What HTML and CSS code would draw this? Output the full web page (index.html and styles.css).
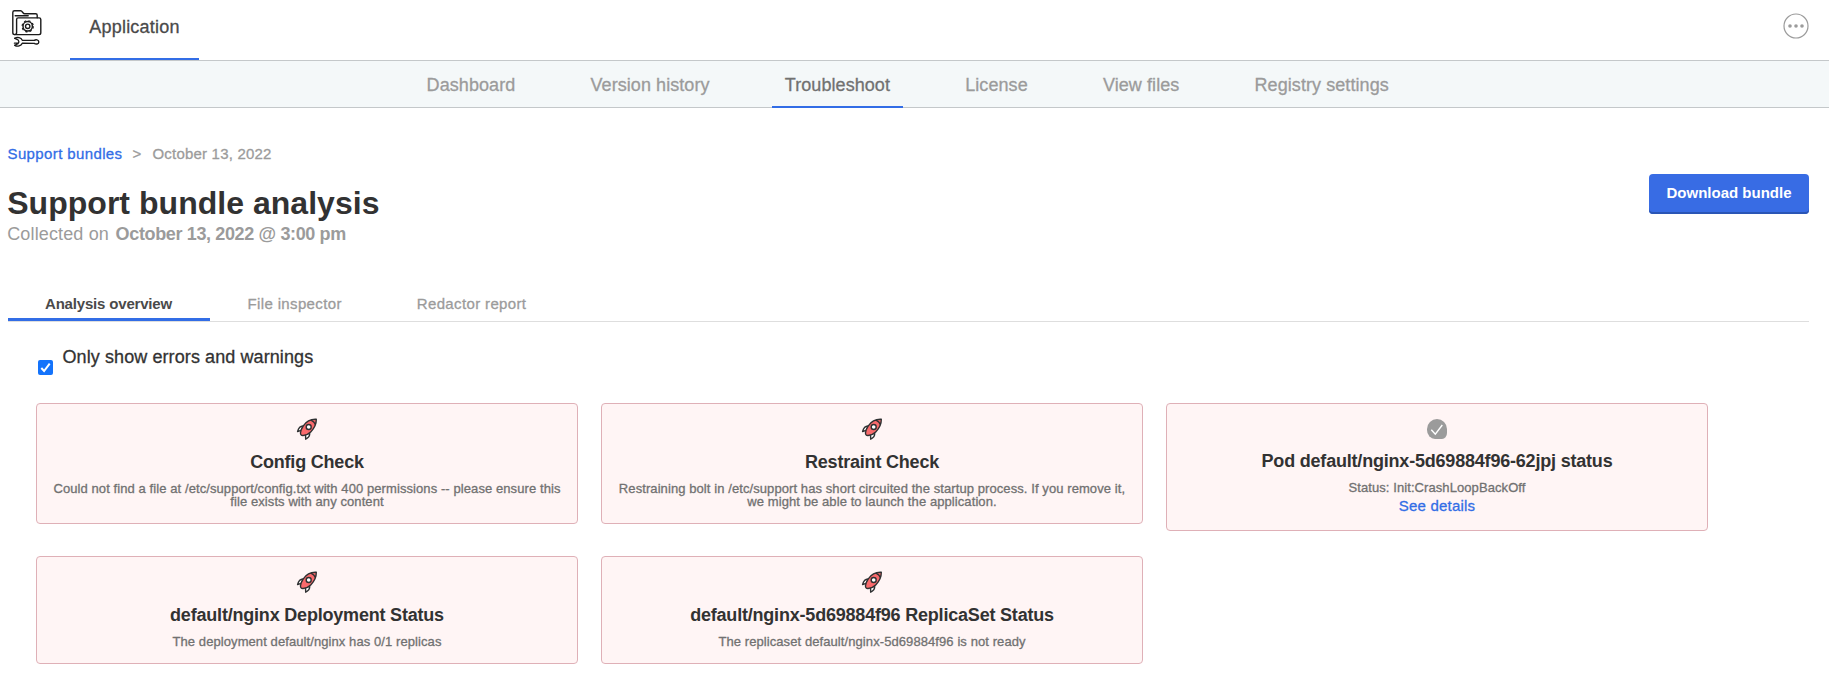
FILE: index.html
```html
<!DOCTYPE html>
<html lang="en">
<head>
<meta charset="utf-8">
<title>Support bundle analysis</title>
<link rel="stylesheet" href="styles.css">
</head>
<body>
<svg class="defs" aria-hidden="true">
  <symbol id="rocket" viewBox="0 0 22 22">
    <g stroke="#2f3132" stroke-width="1.4" stroke-linejoin="round" stroke-linecap="round">
      <path fill="#fff" d="M7 8C4 8 2.300 10.700 1.600 13.500l3.600-1.200zM13.600 15.200c.4 2.700-1.600 4.900-3.900 6l-.2-4.400z"/>
      <path fill="#f96a6c" d="M20.300 1.300C15 1 10.200 3.600 7.300 7.800 5.700 10.200 4.800 12.600 4.500 14.700c-.2 1.800.8 3 2.600 2.800 2.700-.3 5.600-1.300 7.600-3.400 3.400-3.600 5.700-7.600 5.600-12.800z"/>
      <path fill="none" d="M15.300 2.300c2 .9 3.300 2.300 4 4"/>
      <circle cx="12.700" cy="9" r="2.500" fill="#fff"/>
    </g>
  </symbol>
</svg>

<header class="topbar">
  <svg class="logo" viewBox="0 0 30 37" fill="none" stroke="#1b1b1b" stroke-width="1.400" stroke-linejoin="round" stroke-linecap="round">
    <path d="M2.700 24.600C1.500 24.600.8 23.800.8 22.800V2.500C.8 1.400 1.500.8 2.500.8h6.200c1.700 0 2.100 3 4 3h11c1 0 1.500.6 1.500 1.500v2.500"/>
    <path d="M3.200 5.700h13"/>
    <path d="M2.700 24.600c1.300 0 1.900-.8 1.900-1.800V9.500c0-1 .6-1.600 1.500-1.600h21c1 0 1.700.6 1.700 1.600v13.300c0 1.100-.7 1.800-1.800 1.800z"/>
    <circle cx="15.700" cy="16.300" r="4.700" stroke-width="1.500"/>
    <circle cx="15.700" cy="16.300" r="5.600" stroke-width="1.200" stroke-dasharray="2.200 2.200" stroke-linecap="butt"/>
    <circle cx="15.700" cy="16.300" r="2.200"/>
    <path d="M2.800 28.300C5.500 26.600 9 27.700 10.300 30.300l12 .1c1.300-1 4.500-1 4.500 1.500s-3 2.500-4.500 1.500l-12-.2C9 35.900 5.500 37 2.800 35.300" stroke-width="1.400"/>
    <path d="M2.800 28.300l3.400 1.700.7 1.900-.9 1.700-3.200 1.700M2.400 33.200h3" stroke-width="1.300"/>
  </svg>
  <a class="app-tab medium">Application</a>
  <svg class="more" viewBox="0 0 26 26">
    <circle cx="13" cy="13" r="12" fill="none" stroke="#9b9b9b" stroke-width="1.200"/>
    <g fill="#9b9b9b"><circle cx="7" cy="13" r="1.800"/><circle cx="13" cy="13" r="1.800"/><circle cx="19" cy="13" r="1.800"/></g>
  </svg>
</header>

<nav class="subnav medium">
  <a>Dashboard</a>
  <a>Version history</a>
  <a class="active">Troubleshoot</a>
  <a>License</a>
  <a>View files</a>
  <a>Registry settings</a>
</nav>

<main class="content">
  <div class="crumbs medium"><a>Support bundles</a><span class="sep">&gt;</span><span class="current">October 13, 2022</span></div>
  <section class="heading">
    <div class="titles">
      <h1>Support bundle analysis</h1>
      <p class="collected">Collected on <b>October 13, 2022 @ 3:00 pm</b></p>
    </div>
    <button class="download">Download bundle</button>
  </section>

  <div class="tabs medium">
    <a class="active">Analysis overview</a>
    <a>File inspector</a>
    <a>Redactor report</a>
  </div>

  <label class="filter medium">
    <span class="check"><svg viewBox="0 0 15 15"><path d="M3.300 8l2.800 3L11.700 3.700" fill="none" stroke="#fff" stroke-width="2"/></svg></span>
    <span>Only show errors and warnings</span>
  </label>

  <div class="cards">
    <article class="card">
      <svg class="icon"><use href="#rocket"/></svg>
      <h2>Config Check</h2>
      <p class="medium">Could not find a file at /etc/support/config.txt with 400 permissions -- please ensure this<br>file exists with any content</p>
    </article>
    <article class="card">
      <svg class="icon"><use href="#rocket"/></svg>
      <h2>Restraint Check</h2>
      <p class="medium">Restraining bolt in /etc/support has short circuited the startup process. If you remove it,<br>we might be able to launch the application.</p>
    </article>
    <article class="card">
      <span class="status"><svg viewBox="0 0 20 20"><path d="M4.300 10.700l4 4.500L15.300 6" fill="none" stroke="#fff" stroke-width="1.400"/></svg></span>
      <h2>Pod default/nginx-5d69884f96-62jpj status</h2>
      <p class="medium">Status: Init:CrashLoopBackOff</p>
      <a class="details medium">See details</a>
    </article>
    <article class="card">
      <svg class="icon"><use href="#rocket"/></svg>
      <h2>default/nginx Deployment Status</h2>
      <p class="medium">The deployment default/nginx has 0/1 replicas</p>
    </article>
    <article class="card">
      <svg class="icon"><use href="#rocket"/></svg>
      <h2>default/nginx-5d69884f96 ReplicaSet Status</h2>
      <p class="medium">The replicaset default/nginx-5d69884f96 is not ready</p>
    </article>
  </div>
</main>
</body>
</html>
```
FILE: styles.css
```css
* { box-sizing: border-box; }
body {
  margin: 0;
  background: #fff;
  color: #323232;
  font-family: "Liberation Sans", Arial, sans-serif;
  overflow: hidden;
}
h1, h2, p { margin: 0; }
.defs { display: none; }
.medium { -webkit-text-stroke: 0.3px currentColor; }

.topbar {
  display: flex;
  align-items: flex-start;
  height: 61px;
  padding: 0 20px 0 12px;
  border-bottom: 1px solid #c4c8ca;
}
.logo { width: 30px; height: 37px; margin-top: 10px; }
.app-tab {
  width: 129px;
  height: 60px;
  margin-left: 28px;
  border-bottom: 2px solid #326de6;
  color: #4a4a4a;
  font-size: 18px;
  letter-spacing: 0.24px;
  line-height: 54px;
  text-align: center;
}
.more { width: 26px; height: 26px; margin: 13px 0 0 auto; }

.subnav {
  display: flex;
  gap: 50px;
  height: 47px;
  padding-left: 414px;
  background: #f4f8f9;
  border-bottom: 1px solid #c4c8ca;
  color: #9b9b9b;
  font-size: 18px;
  letter-spacing: 0.07px;
  line-height: 48px;
}
.subnav a { height: 47px; padding: 0 12.6px; }
.subnav .active { color: #717171; border-bottom: 2px solid #326de6; }

.content { padding: 0 20px 0 8px; }
.crumbs {
  display: flex;
  margin-left: -0.5px;
  padding-top: 37px;
  font-size: 15px;
  line-height: 18px;
  color: #9b9b9b;
}
.crumbs a { width: 115px; color: #326de6; letter-spacing: 0.38px; }
.crumbs .sep { width: 30px; padding-left: 10px; }
.crumbs .current { letter-spacing: 0.2px; }

.heading { display: flex; justify-content: space-between; padding-top: 11px; }
.titles { margin-left: -0.8px; }
h1 { margin-top: 9px; font-size: 32px; line-height: 40px; letter-spacing: 0.03px; }
.collected { color: #9b9b9b; font-size: 18px; line-height: 22px; letter-spacing: 0.14px; }
.collected b { margin-left: 1.5px; letter-spacing: -0.36px; }
.download {
  width: 160px;
  height: 40px;
  padding: 0 0 4px;
  border: 0;
  border-radius: 4px;
  background: #386ce4;
  box-shadow: inset 0 -2px #2a55b5;
  color: #fff;
  font: bold 15px "Liberation Sans", Arial, sans-serif;
}

.tabs {
  display: flex;
  height: 36px;
  margin-top: 41px;
  border-bottom: 1px solid #dedede;
  color: #9b9b9b;
  font-size: 15px;
  letter-spacing: 0.36px;
  line-height: 36px;
}
.tabs a { height: 35px; padding: 0 37.5px; }
.tabs .active {
  width: 202px;
  padding: 0 1px 0 0;
  border-bottom: 3px solid #326de6;
  color: #4a4a4a;
  font-weight: bold;
  letter-spacing: -0.18px;
  text-align: center;
  -webkit-text-stroke: 0;
}

.filter {
  display: flex;
  gap: 9.5px;
  height: 81px;
  padding: 24px 0 0 30px;
  font-size: 18px;
  letter-spacing: 0.09px;
  line-height: 22px;
}
.check { width: 15px; height: 15px; margin-top: 14px; border-radius: 2px; background: #1473fb; }
.check svg { display: block; }

.cards {
  display: grid;
  grid-template-columns: repeat(3, 542px);
  column-gap: 23px;
  row-gap: 25px;
  align-items: start;
  padding-left: 28px;
}
.card {
  display: flex;
  flex-direction: column;
  align-items: center;
  padding: 14px 0 15px;
  border: 1px solid #dfb0b7;
  border-radius: 4px;
  background: #fff5f5;
  text-align: center;
}
.icon { width: 22px; height: 22px; }
.status {
  width: 20px;
  height: 20px;
  margin-top: 1px;
  border-radius: 10px 10px 5px 8px / 10px 10px 6px 9px;
  background: #9b9b9b;
}
.status svg { display: block; }
h2 { margin-top: 11px; font-size: 18px; line-height: 22px; letter-spacing: -0.2px; }
.card p { margin-top: 9px; color: #717171; font-size: 13px; line-height: 13px; letter-spacing: 0.085px; white-space: nowrap; }
.details { margin-top: 3px; color: #326de6; font-size: 15px; line-height: 18px; letter-spacing: 0.2px; }
```
